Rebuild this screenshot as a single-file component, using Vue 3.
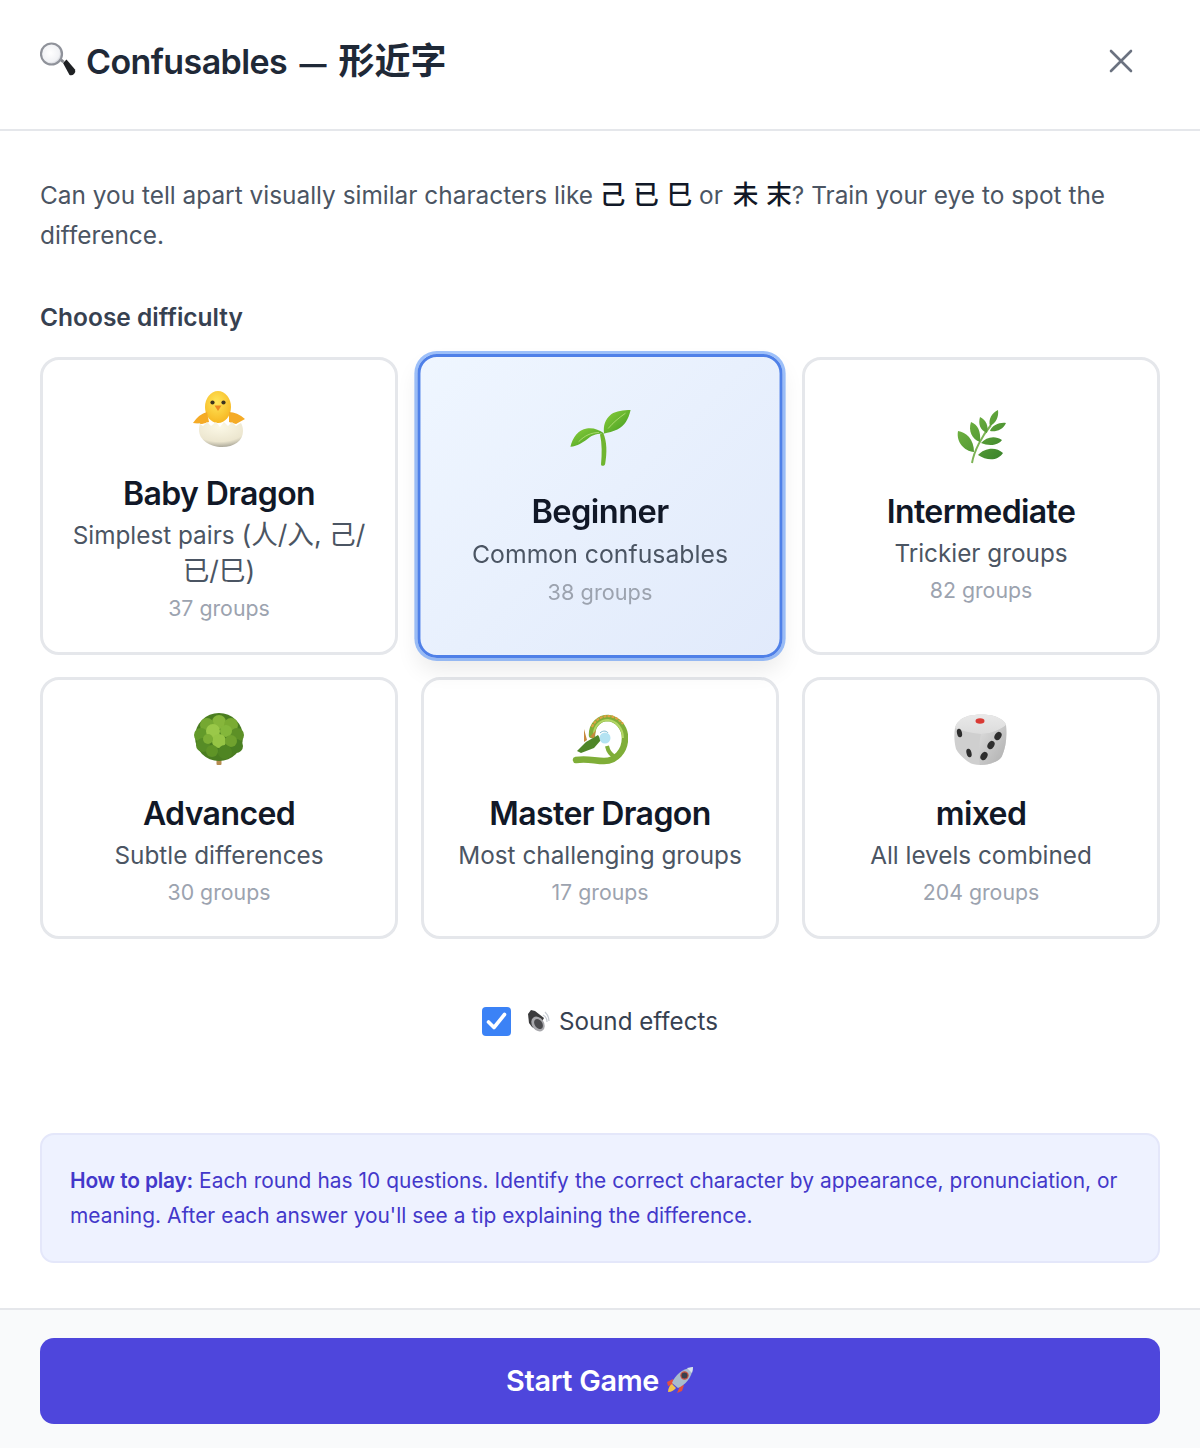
<script setup>
const levels = [
  { id: 'baby', icon: 'chick', name: 'Baby Dragon', desc: 'Simplest pairs ', descZh: '(人/入, 己/已/巳)', count: '37 groups' },
  { id: 'beginner', icon: 'sprout', name: 'Beginner', desc: 'Common confusables', count: '38 groups', active: true },
  { id: 'intermediate', icon: 'herb', name: 'Intermediate', desc: 'Trickier groups', count: '82 groups' },
  { id: 'advanced', icon: 'tree', name: 'Advanced', desc: 'Subtle differences', count: '30 groups' },
  { id: 'master', icon: 'dragon', name: 'Master Dragon', desc: 'Most challenging groups', count: '17 groups' },
  { id: 'mixed', icon: 'dice', name: 'mixed', desc: 'All levels combined', count: '204 groups' }
]

// clumps of foliage on the tree, back to front
const treeBumps = [
  [219, 722, 7, '#86b63a'], [207, 725, 7, '#75a832'], [231, 725, 7, '#7aab33'],
  [201, 735, 7, '#649a2b'], [237, 735, 7, '#5d9028'], [213, 731, 7, '#9ac848'],
  [226, 731, 6, '#84b73b'], [203, 745, 7, '#568c25'], [236, 746, 7, '#4a7f20'],
  [219, 741, 7, '#96c545'], [208, 739, 5, '#7bae35'], [231, 741, 6, '#6fa22e'],
  [212, 751, 6, '#5f9428'], [225, 752, 7, '#4f8522']
]
</script>

<template>
  <div class="modal">
    <header class="head">
      <h1 class="title">
        <svg class="title-icon" width="36" height="36" viewBox="0 0 36 36">
          <defs>
            <radialGradient id="lens" cx="0.45" cy="0.45" r="0.6">
              <stop offset="0" stop-color="#ffffff" />
              <stop offset="0.7" stop-color="#f1f2f5" />
              <stop offset="1" stop-color="#b9bcc4" />
            </radialGradient>
          </defs>
          <path d="M23 22l3.500-3.500 8.500 10q1 2.500-1 4.500t-4.500 1z" fill="#1f2124" />
          <path d="M19 19l2-2 3.500 3-2 2z" fill="#85888e" />
          <circle cx="11.500" cy="13" r="10.500" fill="url(#lens)" stroke="#8f929a" stroke-width="2.200" />
        </svg>
        <span class="title-text">Confusables <span class="dash">—</span> <span class="title-zh">形近字</span></span>
      </h1>
      <svg class="close" width="24" height="24" viewBox="0 0 24 24" fill="none" stroke="#6b7280" stroke-width="2.600" stroke-linecap="round">
        <path d="M2 2l20 20M22 2L2 22" />
      </svg>
    </header>

    <main class="body">
      <p class="intro">
        Can you tell apart visually similar characters like
        <b class="zh">己 已 巳</b> or <b class="zh second">未 末</b>? Train your eye to spot the difference.
      </p>

      <h2 class="choose">Choose difficulty</h2>

      <div class="levels">
        <div v-for="l in levels" :key="l.id" class="level" :class="{ active: l.active }">
          <div class="level-icon">
            <svg v-if="l.icon === 'chick'" width="56" height="60" viewBox="191 391 56 60">
              <defs>
                <radialGradient id="chickHead" cx="0.45" cy="0.35" r="0.7">
                  <stop offset="0" stop-color="#ffe65a" />
                  <stop offset="1" stop-color="#f6b41f" />
                </radialGradient>
                <radialGradient id="egg" cx="0.5" cy="0.2" r="0.9">
                  <stop offset="0" stop-color="#fbf8e6" />
                  <stop offset="0.65" stop-color="#ece6cf" />
                  <stop offset="1" stop-color="#8f8d82" />
                </radialGradient>
              </defs>
              <ellipse cx="218" cy="408" rx="13" ry="16" fill="url(#chickHead)" />
              <path d="M207 413q-8 2-14 11l9 1 7-2zM229 413q8 0 16 7l-9 5-7-2z" fill="#f5ab26" />
              <path d="M196 424l4 1 3 2 4-4 4 4 5-4 4 5 4-5 4 4 4-4 4 4 3-2 2-1c1.500 3 2 5 2 8 0 10-9 16-21 16s-23-7-23-17c0-3 .5-5 1-7z" fill="url(#egg)" />
              <circle cx="212.500" cy="403.500" r="2.100" fill="#3b3320" />
              <circle cx="223.500" cy="403.500" r="2.100" fill="#3b3320" />
              <path d="M214.500 406.500h7l-3.500 5.500z" fill="#ed8a1f" />
            </svg>

            <svg v-else-if="l.icon === 'sprout'" width="62" height="60" viewBox="568 407 62 60">
              <defs>
                <linearGradient id="leaf" x1="0" y1="0" x2="1" y2="1">
                  <stop offset="0" stop-color="#8ccf3c" />
                  <stop offset="1" stop-color="#3f9a20" />
                </linearGradient>
              </defs>
              <path d="M602 433c4 9 4 20 2 31-1 2-4 2-4 0 1-10 1-20-1-29z" fill="#6fb52f" />
              <path d="M570 447c2-9 8-17 16-18 6-1 12 1 17 5-6 0-11 1-16 5-5 4-10 7-17 8z" fill="url(#leaf)" />
              <path d="M629 411c-2 9-6 16-13 19-4 2-9 3-13 4-1-8 1-14 7-19 5-3 12-4 19-4z" fill="url(#leaf)" />
              <path d="M578 442c6-6 12-9 20-9M607 429c5-6 10-10 17-15" stroke="#b7e27a" stroke-width="0.800" fill="none" />
            </svg>

            <svg v-else-if="l.icon === 'herb'" width="52" height="56" viewBox="954 411 52 56">
              <defs>
                <linearGradient id="herbLeaf" x1="0" y1="0" x2="1" y2="1">
                  <stop offset="0" stop-color="#7cbd45" />
                  <stop offset="1" stop-color="#37802a" />
                </linearGradient>
              </defs>
              <path d="M971 464c2-12 10-27 19-38" stroke="#7db356" stroke-width="2" fill="none" />
              <path d="M957 432c8 1 16 8 16 21-10-1-18-10-16-21zM970 423c7 3 10 9 9 20-8-3-12-11-9-20zM979 418c6 3 9 9 7 16-7-3-9-9-7-16zM997 411c1 7-2 13-8 16-2-7 2-13 8-16zM1005 424c-3 7-10 9-16 8 2-6 10-9 16-8zM1001 441c-4 6-14 6-21 3 5-6 14-8 21-3zM1002 454c-5 8-16 8-25 2 6-7 18-9 25-2z" fill="url(#herbLeaf)" />
            </svg>

            <svg v-else-if="l.icon === 'tree'" width="52" height="56" viewBox="193 712 52 56">
              <defs>
                <filter id="soft"><feGaussianBlur stdDeviation="0.4" /></filter>
              </defs>
              <rect x="216.500" y="755" width="5" height="10" rx="1" fill="#b58c50" />
              <circle cx="219" cy="737" r="24" fill="#4a7d20" />
              <g filter="url(#soft)">
                <circle v-for="(b, i) in treeBumps" :key="i" :cx="b[0]" :cy="b[1]" :r="b[2]" :fill="b[3]" />
              </g>
            </svg>

            <svg v-else-if="l.icon === 'dragon'" width="56" height="54" viewBox="572 713 56 54">
              <path d="M592 735c0-11 8-17 16-17 10 1 17 10 17 20 0 13-9 23-21 23-9 0-17-3-28-1" fill="none" stroke="#7fae38" stroke-width="6.500" stroke-linecap="round" />
              <path d="M594 734c0-9 7-14 14-14 9 1 15 9 15 18" fill="none" stroke="#b2d665" stroke-width="2" />
              <path d="M592 727c3-7 9-11 17-11 5 .5 10 3 14 8" fill="none" stroke="#e0a044" stroke-width="2.200" stroke-dasharray="3 1" />
              <path d="M607 746c1 5 4 9 8 11l4-2" stroke="#7fae38" stroke-width="4" fill="none" />
              <path d="M577 751l9-9 12-7 3 5-7 8-13 5z" fill="#4f8628" />
              <path d="M584 742l0-13 3 11zM590 737l6-7-2 8z" fill="#c8883c" />
              <circle cx="605" cy="738" r="5.500" fill="#b4e3f2" />
              <path d="M600 733c3-3 7-2 8 0" stroke="#7bb8d0" fill="none" />
            </svg>

            <svg v-else-if="l.icon === 'dice'" width="56" height="54" viewBox="953 713 56 54">
              <defs>
                <linearGradient id="dieTop" x1="0" y1="0" x2="0" y2="1">
                  <stop offset="0" stop-color="#e9e9e9" />
                  <stop offset="1" stop-color="#dcdcdc" />
                </linearGradient>
                <linearGradient id="dieRight" x1="0" y1="0" x2="1" y2="1">
                  <stop offset="0" stop-color="#dedede" />
                  <stop offset="1" stop-color="#aeaeae" />
                </linearGradient>
              </defs>
              <path d="M968 716c8-2 19-2 26 0 6 2 11 5 12 9 1 12 0 22-4 31-2 5-12 9-22 9-5 0-9-1-13-4-5-4-9-8-11-12-2-8-2-15-1-21 1-5 6-10 13-12z" fill="#cfcfcf" />
              <path d="M968 716c8-2 19-2 26 0 6 2 11 5 12 9-4 4-15 9-25 9-10-1-22-4-26-6 1-5 6-10 13-12z" fill="url(#dieTop)" />
              <path d="M981 734c10 0 21-5 25-9 1 12 0 22-4 31-2 5-12 9-22 9-2-10-1-22 1-31z" fill="url(#dieRight)" />
              <ellipse cx="980" cy="721" rx="4.500" ry="2.800" fill="#d93a34" />
              <ellipse cx="959.500" cy="733" rx="2.500" ry="4.400" fill="#2e2e2e" transform="rotate(-12 959.500 733)" />
              <ellipse cx="969" cy="753" rx="2.500" ry="4.400" fill="#2e2e2e" transform="rotate(-14 969 753)" />
              <ellipse cx="998" cy="736" rx="3.200" ry="4.400" fill="#2e2e2e" transform="rotate(32 998 736)" />
              <ellipse cx="991" cy="745" rx="3.200" ry="4.400" fill="#2e2e2e" transform="rotate(32 991 745)" />
              <ellipse cx="984" cy="756" rx="3.200" ry="4.400" fill="#2e2e2e" transform="rotate(32 984 756)" />
            </svg>
          </div>
          <div class="level-name">{{ l.name }}</div>
          <div class="level-desc">{{ l.desc }}<span v-if="l.descZh" class="desc-zh">{{ l.descZh }}</span></div>
          <div class="level-count">{{ l.count }}</div>
        </div>
      </div>

      <label class="sound">
        <span class="check">
          <svg width="21" height="18" viewBox="0 0 21 18" fill="none" stroke="#fff" stroke-width="3.600" stroke-linecap="round" stroke-linejoin="round">
            <path d="M2.500 10l5.500 5.500L18.500 2.500" />
          </svg>
        </span>
        <svg class="speaker" width="24" height="24" viewBox="0 0 24 24">
          <path d="M2 5l3-4 4 1 9 7-7 12-5-3-3-4z" fill="#3a3a3c" />
          <ellipse cx="12" cy="15" rx="6" ry="8" fill="#a8a8ac" transform="rotate(-35 12 15)" />
          <ellipse cx="12.500" cy="15" rx="3.800" ry="5.500" fill="#4a4a4d" transform="rotate(-35 12.500 15)" />
          <path d="M17 6c2 1 4 4 4 7M19 3c2 2 4 5 4 9" stroke="#c6cbd2" stroke-width="1.200" fill="none" />
        </svg>
        <span>Sound effects</span>
      </label>

      <div class="howto">
        <b>How to play:</b> Each round has 10 questions. Identify the correct character by appearance, pronunciation, or meaning. After each answer you'll see a tip explaining the difference.
      </div>
    </main>

    <footer class="foot">
      <button class="start">
        <span>Start Game</span>
        <svg width="28" height="28" viewBox="0 0 28 28">
          <path d="M7 13l-6 3 1 4 6-2zM14 20l-3 7 5-2 2-6z" fill="#e2503f" />
          <path d="M2 26c0-4 2-7 4-8l4 4c-2 2-4 4-8 4z" fill="#f3c34a" />
          <path d="M6 17c3-8 10-14 21-16-1 11-8 18-15 21z" fill="#a9bccd" />
          <path d="M21 2l6-1c0 2-.5 4-1 6z" fill="#d8e3ec" />
          <circle cx="18.500" cy="9.500" r="3.600" fill="#39414d" stroke="#c9503f" stroke-width="1.200" />
        </svg>
      </button>
    </footer>
  </div>
</template>

<style scoped>
.modal {
  width: 1200px;
  height: 1448px;
  background: #fff;
  display: flex;
  flex-direction: column;
  font-family: Inter, "Noto Sans CJK SC", sans-serif;
  overflow: hidden;
}

.head {
  height: 131px;
  box-sizing: border-box;
  border-bottom: 2px solid #e5e7eb;
  padding: 0 67px 8px 40px;
  display: flex;
  align-items: center;
  justify-content: space-between;
}

.title {
  margin: 0 0 6px;
  display: flex;
  align-items: center;
  gap: 10px;
  font-size: 34px;
  font-weight: 600;
  letter-spacing: -0.6px;
  word-spacing: 4.500px;
  color: #1f2937;
}

.title-icon {
  flex-shrink: 0;
  margin-top: 3px;
}

.dash {
  font-size: 27px;
  font-weight: 700;
}

.title-zh {
  font-size: 36px;
  letter-spacing: 0;
  font-weight: 600;
}

.close {
  flex-shrink: 0;
}

.body {
  flex: 1;
  padding: 44px 40px 0;
}

.intro {
  margin: 0;
  font-size: 24.4px;
  line-height: 40px;
  color: #4b5563;
}

.zh {
  font-size: 25.6px;
  font-weight: 500;
  word-spacing: 1px;
  color: #111827;
}

.zh.second {
  margin-left: 3px;
}

.choose {
  margin: 46px 0 24px;
  font-size: 24.5px;
  line-height: 32px;
  font-weight: 600;
  color: #374151;
}

.levels {
  display: grid;
  grid-template-columns: repeat(3, 358px);
  grid-template-rows: 298px 262px;
  gap: 22px 23px;
}

.level {
  box-sizing: border-box;
  border: 3px solid #e5e7eb;
  border-radius: 19px;
  padding: 28px 20px 28px;
  background: #fff;
  text-align: center;
  display: flex;
  flex-direction: column;
  justify-content: center;
}

.level.active {
  border-color: #4f80e8;
  background: linear-gradient(135deg, #eff6ff 0%, #e1eafb 100%);
  transform: scale(1.02);
  box-shadow: 0 0 0 3px rgba(59, 130, 246, 0.5), 0 12px 22px rgba(0, 0, 0, 0.08);
}

.level-icon {
  height: 64px;
  display: flex;
  align-items: center;
  justify-content: center;
}

.level-name {
  margin-top: 20px;
  font-size: 32px;
  line-height: 44px;
  font-weight: 600;
  letter-spacing: -0.6px;
  color: #111827;
}

.level-desc {
  margin-top: 1px;
  font-size: 24.3px;
  line-height: 36px;
  color: #4b5563;
}

.desc-zh {
  font-size: 26.6px;
  line-height: 0;
}

.level-count {
  margin-top: 3px;
  font-size: 21.3px;
  line-height: 32px;
  color: #9ca3af;
}

.sound {
  margin-top: 65px;
  height: 34px;
  display: flex;
  align-items: center;
  justify-content: center;
  font-size: 24.2px;
  color: #374151;
}

.check {
  width: 29px;
  height: 29px;
  border-radius: 4px;
  background: #3b82f6;
  display: flex;
  align-items: center;
  justify-content: center;
  margin-right: 15px;
}

.speaker {
  margin-right: 9px;
}

.howto {
  margin-top: 95px;
  box-sizing: border-box;
  height: 130px;
  padding: 28px 28px;
  border: 2px solid #e4e7fa;
  border-radius: 14px;
  background: #eef2ff;
  font-size: 20.9px;
  line-height: 35px;
  word-spacing: 0.2px;
  color: #4338ca;
}

.howto b {
  font-weight: 600;
  letter-spacing: -0.2px;
}

.foot {
  border-top: 2px solid #e5e7eb;
  background: #f9fafb;
  padding: 28px 40px 24px;
}

.start {
  width: 100%;
  height: 86px;
  border: none;
  border-radius: 14px;
  padding: 0 0 2px;
  background: #4e46dc;
  color: #fff;
  font-family: inherit;
  font-size: 28.8px;
  font-weight: 600;
  letter-spacing: -0.3px;
  display: flex;
  align-items: center;
  justify-content: center;
  gap: 7px;
}
</style>
